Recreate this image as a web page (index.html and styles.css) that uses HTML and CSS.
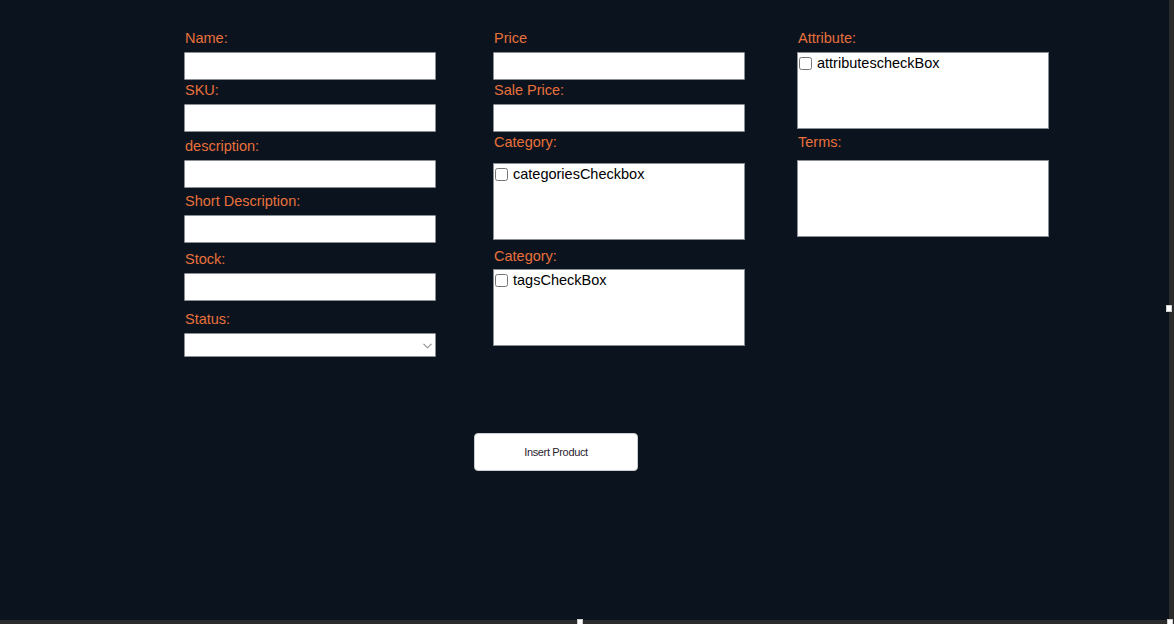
FILE: index.html
```html
<!DOCTYPE html>
<html>
<head>
<meta charset="utf-8">
<link rel="stylesheet" href="styles.css">
</head>
<body>
<div class="frame">
  <div class="canvas">
    <div class="form">
      <div class="col">
        <label class="lbl">Name:</label>
        <input class="txt" type="text">
        <label class="lbl g2">SKU:</label>
        <input class="txt" type="text">
        <label class="lbl g6">description:</label>
        <input class="txt c6" type="text">
        <label class="lbl g5">Short Description:</label>
        <input class="txt c6" type="text">
        <label class="lbl g8">Stock:</label>
        <input class="txt c6" type="text">
        <label class="lbl g10">Status:</label>
        <div class="selwrap">
          <select class="sel"><option></option></select>
          <svg class="chev" width="9" height="6" viewBox="0 0 9 6"><path d="M0.5 0.8 L4.5 4.8 L8.5 0.8" fill="none" stroke="#8c8c8c" stroke-width="1.1"/></svg>
        </div>
      </div>
      <div class="col">
        <label class="lbl">Price</label>
        <input class="txt" type="text">
        <label class="lbl g2">Sale Price:</label>
        <input class="txt" type="text">
        <label class="lbl g2">Category:</label>
        <div class="box c12"><label class="chk"><input type="checkbox"><span>categoriesCheckbox</span></label></div>
        <label class="lbl g8">Category:</label>
        <div class="box c4"><label class="chk"><input type="checkbox"><span>tagsCheckBox</span></label></div>
      </div>
      <div class="col">
        <label class="lbl">Attribute:</label>
        <div class="box"><label class="chk"><input type="checkbox"><span>attributescheckBox</span></label></div>
        <label class="lbl g5">Terms:</label>
        <div class="box c9"></div>
      </div>
    </div>
    <div class="actions">
      <button class="btn" type="button">Insert Product</button>
    </div>
  </div>
</div>
<div class="handle h-right"></div>
<div class="handle h-bottom"></div>
<div class="handle h-corner"></div>
</body>
</html>
```

FILE: styles.css
```css
html, body {
  margin: 0;
  padding: 0;
}
body {
  width: 1174px;
  height: 624px;
  overflow: hidden;
  background: #2b2b2b;
  font-family: "Liberation Sans", Arial, sans-serif;
  position: relative;
}
.frame {
  width: 1169px;
  height: 620px;
}
.canvas {
  width: 1169px;
  height: 620px;
  background: #0b141e;
  box-sizing: border-box;
  padding: 30px 0 0 184px;
}
.form {
  display: grid;
  grid-template-columns: 309px 304px 252px;
  align-items: start;
}
.col {
  display: flex;
  flex-direction: column;
  width: 252px;
}
.lbl {
  display: block;
  color: #e8703c;
  font-size: 14.5px;
  line-height: 17px;
  height: 17px;
  margin-bottom: 5px;
  padding-left: 1px;
  white-space: nowrap;
}
.g2 { margin-top: 2px; }
.g4 { margin-top: 4px; }
.g5 { margin-top: 5px; }
.g6 { margin-top: 6px; }
.g7 { margin-top: 7px; }
.g8 { margin-top: 8px; }
.g10 { margin-top: 10px; }
.c4 { margin-top: -1px; }
.c6 { margin-top: 1px; }
.c9 { margin-top: 4px; }
.c12 { margin-top: 7px; }
.txt {
  display: block;
  box-sizing: border-box;
  width: 252px;
  height: 28px;
  margin: 0;
  padding: 0 4px;
  background: #fff;
  border: 1px solid #8a8f96;
  border-radius: 1px;
  font-family: "Liberation Sans", Arial, sans-serif;
  font-size: 14px;
  outline: none;
}
.selwrap {
  position: relative;
  width: 252px;
  height: 24px;
}
.sel {
  display: block;
  box-sizing: border-box;
  width: 252px;
  height: 24px;
  margin: 0;
  background: #fff;
  border: 1px solid #8a8f96;
  border-radius: 1px;
  font-family: "Liberation Sans", Arial, sans-serif;
  font-size: 13px;
  color: #000;
  appearance: none;
  -webkit-appearance: none;
  outline: none;
}
.chev {
  position: absolute;
  right: 4px;
  top: 10px;
  pointer-events: none;
}
.box {
  box-sizing: border-box;
  width: 252px;
  height: 77px;
  background: #fff;
  border: 1px solid #8a8f96;
}
.chk {
  display: flex;
  align-items: center;
  height: 19px;
  margin-top: 1px;
  color: #000;
  font-size: 14.5px;
  line-height: 17px;
}
.chk input {
  width: 13px;
  height: 13px;
  margin: 0 5px 0 1px;
}
.actions {
  padding: 76px 0 0 290px;
}
.btn {
  box-sizing: border-box;
  width: 164px;
  height: 38px;
  margin: 0;
  background: #fff;
  border: 1px solid #c9ccd1;
  border-radius: 4px;
  font-family: "Liberation Sans", Arial, sans-serif;
  font-size: 11px;
  letter-spacing: -0.35px;
  color: #2a2231;
  padding: 0;
}
.handle {
  position: absolute;
  background: #fff;
  border: 1px solid #cfcfcf;
  box-sizing: border-box;
}
.h-right {
  left: 1166px;
  top: 305px;
  width: 6px;
  height: 7px;
}
.h-bottom {
  left: 577px;
  top: 619px;
  width: 6px;
  height: 6px;
}
.h-corner {
  left: 1167px;
  top: 619px;
  width: 6px;
  height: 6px;
}
```
